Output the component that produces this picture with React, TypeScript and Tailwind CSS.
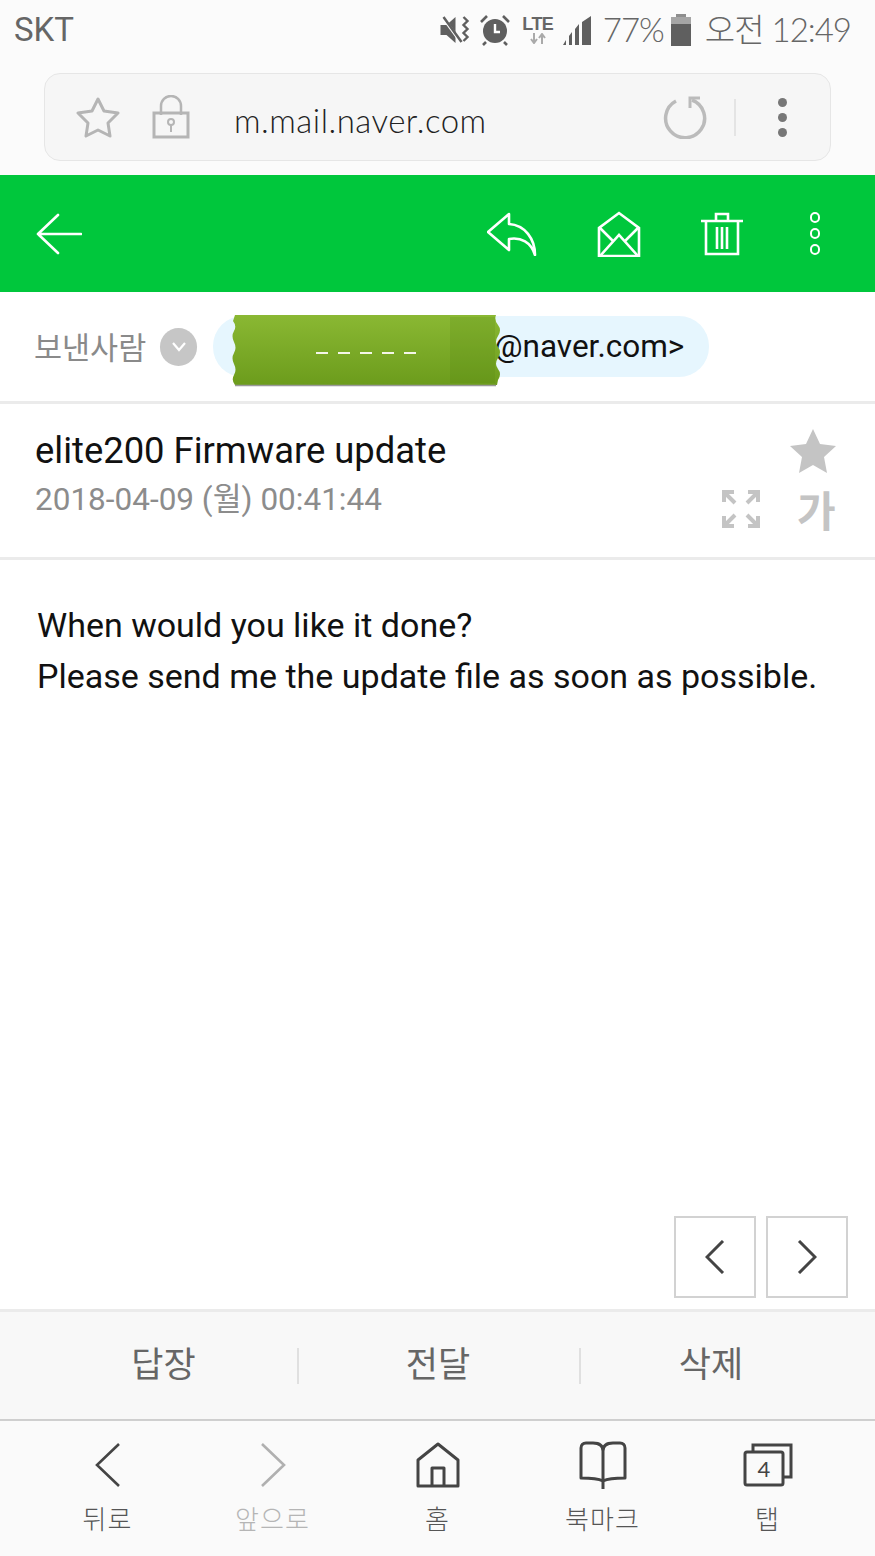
import type { ReactNode } from "react";

function StatusIcons() {
  return (
    <div className="flex items-center">
      {/* muted vibrate */}
      <svg width="33" height="32" viewBox="0 0 32 32" className="mr-[8px]" fill="none">
        <path d="M1 11h6l9-8v26l-9-8H1z" fill="#5f5f5f" />
        <path d="M3 3l19 26" stroke="#fff" strokeWidth="3" />
        <path d="M4 3l18 25" stroke="#5f5f5f" strokeWidth="2.5" />
        <path d="M24 3l4 4-4 4 4 4-4 4 4 4-4 4" stroke="#5f5f5f" strokeWidth="2.4" />
      </svg>
      {/* alarm */}
      <svg width="30" height="32" viewBox="0 0 30 32" className="mr-[12px]" fill="none">
        <circle cx="15" cy="17" r="12" fill="#5f5f5f" />
        <path d="M15 10v8h5" stroke="#fff" strokeWidth="2.4" />
        <path d="M1 8l6-6M29 8l-6-6M6 28l-3 3M24 28l3 3" stroke="#5f5f5f" strokeWidth="2.6" />
      </svg>
      <div className="mr-[8px] flex w-[32px] flex-col items-center">
        <span className="text-[18px] leading-[18px] font-bold tracking-[-0.5px] text-[#666] [font-family:'Liberation_Sans',sans-serif]">LTE</span>
        <svg width="18" height="11" viewBox="0 0 18 11" fill="none">
          <path d="M5 0v9M2 6l3 4 3-4M13 11V2M10 5l3-4 3 4" stroke="#aaa" strokeWidth="2" />
        </svg>
      </div>
      <svg width="30" height="30" viewBox="0 0 30 30" className="mr-[11px]" fill="#5f5f5f">
        <path d="M1 30l3-5v5zM7 30v-9l3-4v13zM13 30V14l4-5v21zM20 30V7l9-6v29z" />
      </svg>
      <span className="mr-[6px] text-[33px] leading-none font-light tracking-[-1px] text-[#666] [font-family:Lato,sans-serif]">77%</span>
      <svg width="22" height="32" viewBox="0 0 22 32" className="mr-[13px]">
        <rect x="6" y="0" width="10" height="4" fill="#8e8e8e" />
        <rect x="1" y="3" width="20" height="7" fill="#a5a5a5" />
        <rect x="1" y="10" width="20" height="22" fill="#5f5f5f" />
      </svg>
      <span className="text-[33px] leading-none font-light tracking-[-1px] text-[#666] [font-family:Lato,'Noto_Sans_CJK_KR',sans-serif]">
        오전 12:49
      </span>
    </div>
  );
}

function AddressBar() {
  return (
    <div className="mx-[44px] flex h-[88px] items-center rounded-[16px] border border-[#e6e6e6] bg-[#f6f6f6]">
      <svg width="44" height="42" viewBox="0 0 44 42" className="ml-[31px]" fill="none">
        <path d="M22 3l6 12 14 2-10 10 2 13-12-6-12 6 2-13L2 17l14-2z" stroke="#b5b5b5" strokeWidth="3" strokeLinejoin="round" />
      </svg>
      <svg width="38" height="44" viewBox="0 0 38 44" className="ml-[32px]" fill="none">
        <path d="M9 20V11a10 10 0 0 1 20 0v9" stroke="#b5b5b5" strokeWidth="2.5" />
        <rect x="2" y="18" width="34" height="24" stroke="#b5b5b5" strokeWidth="3" />
        <circle cx="19" cy="27" r="3" stroke="#b5b5b5" strokeWidth="2" />
        <path d="M19 30v7" stroke="#b5b5b5" strokeWidth="2" />
      </svg>
      <span className="mt-[6px] ml-[44px] text-[33px] leading-none font-light tracking-[0.5px] text-[#222] [font-family:Lato,sans-serif]">
        m.mail.naver.com
      </span>
      <svg width="44" height="44" viewBox="0 0 44 44" className="ml-auto" fill="none">
        <path d="M13 6A19.5 19.5 0 1 0 29 5" stroke="#bbb" strokeWidth="3.5" />
        <path d="M37 3H27v10" stroke="#bbb" strokeWidth="3" />
      </svg>
      <div className="ml-[27px] h-[37px] w-[2px] bg-[#e4e4e4]" />
      <div className="mr-[43px] ml-[42px] flex flex-col gap-[6px]">
        <span className="size-[9px] rounded-full bg-[#777]" />
        <span className="size-[9px] rounded-full bg-[#777]" />
        <span className="size-[9px] rounded-full bg-[#777]" />
      </div>
    </div>
  );
}

function GreenBar() {
  return (
    <div className="flex h-[117px] items-center bg-[#00c73c] pr-[55px] pl-[36px]">
      <svg width="46" height="42" viewBox="0 0 46 42" fill="none" stroke="#fff" strokeWidth="2.6" strokeLinecap="round" strokeLinejoin="round">
        <path d="M22 2L2 21l20 19M2 21h43" />
      </svg>
      <svg width="50" height="44" viewBox="0 0 50 44" className="ml-auto" fill="none" stroke="#fff" strokeWidth="2.6" strokeLinejoin="round">
        <path d="M22 2L1 20l21 18 0-11c12-2 22 3 26 16C48 27 38 13 22 12z" />
      </svg>
      <svg width="44" height="46" viewBox="0 0 44 46" className="ml-[60px]" fill="none" stroke="#fff" strokeWidth="2.6">
        <path d="M2 45V17L22 2l20 15v28z" />
        <path d="M2 16l14 14M42 16L28 30M3 45l19-21 19 21" />
      </svg>
      <svg width="44" height="44" viewBox="0 0 44 44" className="ml-[59px]" fill="none" stroke="#fff" strokeWidth="2.6">
        <path d="M1 9h42M16 9V2h12v7M6 9v33h32V9M17 15v22M22 15v22M27 15v22" />
      </svg>
      <div className="ml-[66px] flex flex-col gap-[5px]">
        <span className="h-[11px] w-[10px] rounded-full border-[2.5px] border-white" />
        <span className="h-[11px] w-[10px] rounded-full border-[2.5px] border-white" />
        <span className="h-[11px] w-[10px] rounded-full border-[2.5px] border-white" />
      </div>
    </div>
  );
}

function Tape() {
  return (
    <svg width="268" height="72" viewBox="0 0 268 72" className="absolute top-[-1px] left-[19px]">
      <defs>
        <linearGradient id="tapeFill" x1="0" y1="0" x2="0" y2="1">
          <stop offset="0" stopColor="#8ab833" />
          <stop offset="1" stopColor="#6c9c1c" />
        </linearGradient>
      </defs>
      <path
        d="M3 0H264Q262 5 266 10T266 21 266 32 266 43 266 54 266 65L265 70H3Q-1 65 2 60T2 49 2 38 2 27 2 16 1 6z"
        fill="url(#tapeFill)"
      />
      <rect x="218" y="2" width="45" height="66" fill="#4f7f10" opacity="0.18" />
      <path d="M3 70.5H264" stroke="#999" strokeWidth="1.5" />
      <path d="M84 38h12M106 38h12M128 38h12M150 38h12M172 38h12" stroke="#f4f6e8" strokeWidth="2" />
    </svg>
  );
}

function SenderRow() {
  return (
    <div className="flex h-[112px] items-center border-b-[3px] border-[#ebebeb] pl-[34px]">
      <span className="text-[30.5px] leading-none text-[#8a8a8a] [font-family:'Noto_Sans_CJK_KR',sans-serif]">
        보낸사람
      </span>
      <span className="ml-[14px] flex h-[38px] w-[37px] items-center justify-center rounded-full bg-[#c6c6c6]">
        <svg width="16" height="11" viewBox="0 0 16 11" fill="none">
          <path d="M2 2l6 7 6-7" stroke="#fff" strokeWidth="2.2" />
        </svg>
      </span>
      <div className="relative ml-[16px] flex h-[61px] w-[496px] items-center justify-end rounded-[30px] bg-[#e6f6fe] pr-[25px]">
        <Tape />
        <span className="text-[31.5px] leading-none text-[#111] [font-family:Roboto,sans-serif]">@naver.com&gt;</span>
      </div>
    </div>
  );
}

function SubjectRow() {
  return (
    <div className="flex h-[156px] border-b-[3px] border-[#ebebeb] pl-[35px]">
      <div className="flex flex-col pt-[26px]">
        <span className="text-[36.4px] leading-[42px] text-[#111] [font-family:Roboto,sans-serif]">elite200 Firmware update</span>
        <span className="mt-[9px] text-[31.5px] leading-[38px] text-[#8c8c8c] [font-family:Roboto,'Noto_Sans_CJK_KR',sans-serif]">
          2018-04-09 (월) 00:41:44
        </span>
      </div>
      <div className="mr-[40px] ml-auto flex flex-col items-end pt-[25px]">
        <svg width="46" height="44" viewBox="0 0 46 44" className="mr-[-1px]" fill="#c4c4c4">
          <path d="M23 0l7 15 16 2-12 11 3 16-14-8-14 8 3-16L0 17l16-2z" />
        </svg>
        <div className="mt-[14px] flex items-center gap-[37px]">
          <svg width="38" height="38" viewBox="0 0 38 38" fill="none" stroke="#c4c4c4" strokeWidth="4">
            <path d="M2 12V2h10M2 2l11 11M26 2h10v10M36 2L25 13M2 26v10h10M2 36l11-11M26 36h10V26M36 36L25 25" />
          </svg>
          <span className="w-[38px] text-[42px] leading-[44px] font-bold text-[#c4c4c4] [font-family:'Noto_Sans_CJK_KR',sans-serif]">
            가
          </span>
        </div>
      </div>
    </div>
  );
}

function PagerButton({ dir }: { dir: "prev" | "next" }) {
  return (
    <button className="flex size-[82px] items-center justify-center border-[2px] border-[#d2d2d2] bg-white">
      <svg width="20" height="34" viewBox="0 0 20 34" fill="none" stroke="#444" strokeWidth="3">
        <path d={dir === "prev" ? "M18 1L2 17l16 16" : "M2 1l16 16L2 33"} />
      </svg>
    </button>
  );
}

function ToolbarItem({ label, faded, children }: { label: string; faded?: boolean; children: ReactNode }) {
  return (
    <div className="flex flex-col items-center">
      <div className="flex h-[48px] items-center justify-center">{children}</div>
      <span
        className={
          "mt-[12px] text-[26px] leading-[34px] font-light tracking-[1px] [font-family:'Noto_Sans_CJK_KR',sans-serif] " +
          (faded ? "text-[#b5b5b5]" : "text-[#555]")
        }
      >
        {label}
      </span>
    </div>
  );
}

export default function App() {
  return (
    <div className="flex h-[1556px] w-[875px] flex-col overflow-hidden bg-white">
      <header className="flex h-[175px] flex-col bg-[#fbfbfb]">
        <div className="flex h-[73px] items-start justify-between pt-[13px] pr-[24px] pl-[14px]">
          <span className="text-[33px] leading-[34px] text-[#666] [font-family:Roboto,sans-serif]">SKT</span>
          <StatusIcons />
        </div>
        <AddressBar />
      </header>

      <GreenBar />
      <SenderRow />
      <SubjectRow />

      <main className="flex flex-1 flex-col pt-[40px] pr-[27px] pb-[11px] pl-[37px]">
        <p className="text-[34px] leading-[51px] text-[#111] [font-family:Roboto,sans-serif]">
          When would you like it done?
          <br />
          Please send me the update file as soon as possible.
        </p>
        <div className="mt-auto flex justify-end gap-[10px]">
          <PagerButton dir="prev" />
          <PagerButton dir="next" />
        </div>
      </main>

      <div className="grid h-[112px] grid-cols-[299px_282px_294px] items-center border-t-[3px] border-b-[2px] border-t-[#ebebeb] border-b-[#cfcfcf] bg-[#f8f8f8] text-[35px] leading-none text-[#666] [font-family:'Noto_Sans_CJK_KR',sans-serif]">
        <span className="flex h-[36px] items-center justify-center border-r-[2px] border-[#e0e0e0] pb-[8px] pl-[30px]">답장</span>
        <span className="flex h-[36px] items-center justify-center border-r-[2px] border-[#e0e0e0] pr-[2px] pb-[8px]">전달</span>
        <span className="flex h-[36px] items-center justify-center pr-[34px] pb-[8px]">삭제</span>
      </div>

      <nav className="grid h-[135px] grid-cols-5 bg-[#fafafa] px-[25px] pt-[20px]">
        <ToolbarItem label="뒤로">
          <svg width="26" height="44" viewBox="0 0 26 44" fill="none" stroke="#444" strokeWidth="2.6">
            <path d="M24 1L2 22l22 21" />
          </svg>
        </ToolbarItem>
        <ToolbarItem label="앞으로" faded>
          <svg width="26" height="44" viewBox="0 0 26 44" fill="none" stroke="#b0b0b0" strokeWidth="2.6">
            <path d="M2 1l22 21L2 43" />
          </svg>
        </ToolbarItem>
        <ToolbarItem label="홈">
          <svg width="44" height="46" viewBox="0 0 44 46" fill="none" stroke="#444" strokeWidth="3">
            <path d="M2 44V18L22 2l20 16v26zM16 44V26h12v18" strokeLinejoin="round" />
          </svg>
        </ToolbarItem>
        <ToolbarItem label="북마크">
          <svg width="48" height="48" viewBox="0 0 48 48" fill="none" stroke="#444" strokeWidth="3">
            <path d="M24 10c0-6-4-8-10-8H7C4 2 2 4 2 7v30c7 0 16 0 22 3 6-3 15-3 22-3V7c0-3-2-5-5-5h-7c-6 0-10 2-10 8zM24 10v38" strokeLinejoin="round" />
          </svg>
        </ToolbarItem>
        <ToolbarItem label="탭">
          <svg width="50" height="44" viewBox="0 0 50 44" fill="none" stroke="#444" strokeWidth="3">
            <path d="M10 9V2h38v32h-8" />
            <rect x="2" y="9" width="38" height="33" rx="2" />
            <text x="21" y="34" textAnchor="middle" fontSize="22" fontFamily="Lato, sans-serif" fill="#444" stroke="none">
              4
            </text>
          </svg>
        </ToolbarItem>
      </nav>
    </div>
  );
}
